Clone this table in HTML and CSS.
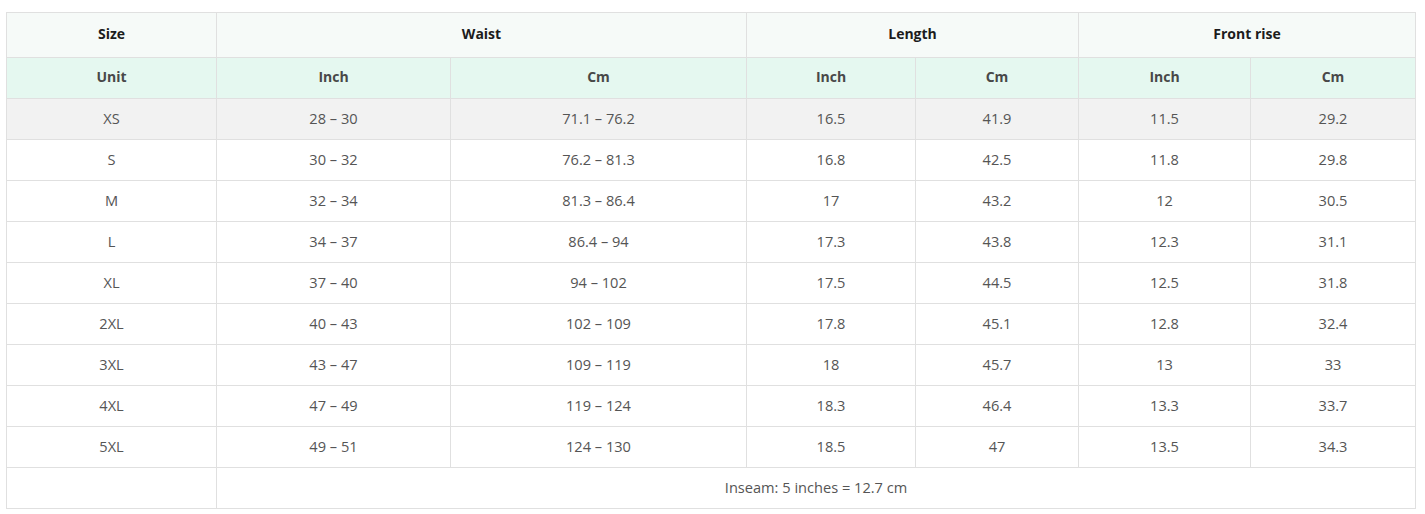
FILE: index.html
```html
<!DOCTYPE html>
<html>
<head>
<meta charset="utf-8">
<link rel="stylesheet" href="styles.css">
</head>
<body>
<div class="wrap">
<table class="chart">
  <colgroup>
    <col class="c1"><col class="c2"><col class="c3"><col class="c4"><col class="c5"><col class="c6"><col class="c7">
  </colgroup>
  <thead>
    <tr class="h1">
      <th>Size</th>
      <th colspan="2">Waist</th>
      <th colspan="2">Length</th>
      <th colspan="2">Front rise</th>
    </tr>
    <tr class="h2">
      <th>Unit</th>
      <th>Inch</th><th>Cm</th>
      <th>Inch</th><th>Cm</th>
      <th>Inch</th><th>Cm</th>
    </tr>
  </thead>
  <tbody>
    <tr class="alt"><td>XS</td><td>28 – 30</td><td>71.1 – 76.2</td><td>16.5</td><td>41.9</td><td>11.5</td><td>29.2</td></tr>
    <tr><td>S</td><td>30 – 32</td><td>76.2 – 81.3</td><td>16.8</td><td>42.5</td><td>11.8</td><td>29.8</td></tr>
    <tr><td>M</td><td>32 – 34</td><td>81.3 – 86.4</td><td>17</td><td>43.2</td><td>12</td><td>30.5</td></tr>
    <tr><td>L</td><td>34 – 37</td><td>86.4 – 94</td><td>17.3</td><td>43.8</td><td>12.3</td><td>31.1</td></tr>
    <tr><td>XL</td><td>37 – 40</td><td>94 – 102</td><td>17.5</td><td>44.5</td><td>12.5</td><td>31.8</td></tr>
    <tr><td>2XL</td><td>40 – 43</td><td>102 – 109</td><td>17.8</td><td>45.1</td><td>12.8</td><td>32.4</td></tr>
    <tr><td>3XL</td><td>43 – 47</td><td>109 – 119</td><td>18</td><td>45.7</td><td>13</td><td>33</td></tr>
    <tr><td>4XL</td><td>47 – 49</td><td>119 – 124</td><td>18.3</td><td>46.4</td><td>13.3</td><td>33.7</td></tr>
    <tr><td>5XL</td><td>49 – 51</td><td>124 – 130</td><td>18.5</td><td>47</td><td>13.5</td><td>34.3</td></tr>
    <tr><td></td><td colspan="6">Inseam: 5 inches = 12.7 cm</td></tr>
  </tbody>
</table>
</div>
</body>
</html>
```

FILE: styles.css
```css
html, body {
  margin: 0;
  padding: 0;
  background: #ffffff;
}
.wrap {
  padding: 12px 0 0 6px;
}
.chart {
  border-collapse: collapse;
  table-layout: fixed;
  width: 1409px;
  font-family: "Open Sans", "Liberation Sans", sans-serif;
  font-size: 14.6px;
  color: #555555;
}
.c1 { width: 210px; }
.c2 { width: 234px; }
.c3 { width: 296px; }
.c4 { width: 169px; }
.c5 { width: 163px; }
.c6 { width: 172px; }
.c7 { width: 165px; }
.chart th,
.chart td {
  border: 1px solid #e0e0e0;
  text-align: center;
  vertical-align: middle;
  padding: 0 0 2px 0;
  line-height: 20px;
}
.chart td {
  height: 38px;
  font-weight: 400;
}
.chart th {
  font-size: 14px;
  font-weight: 700;
}
.h1 th {
  height: 42px;
  background: #f6faf8;
  color: #1c1c1c;
}
.h2 th {
  height: 38px;
  background: #e5f8f0;
  color: #484848;
}
.alt td {
  background: #f2f2f2;
}
```
